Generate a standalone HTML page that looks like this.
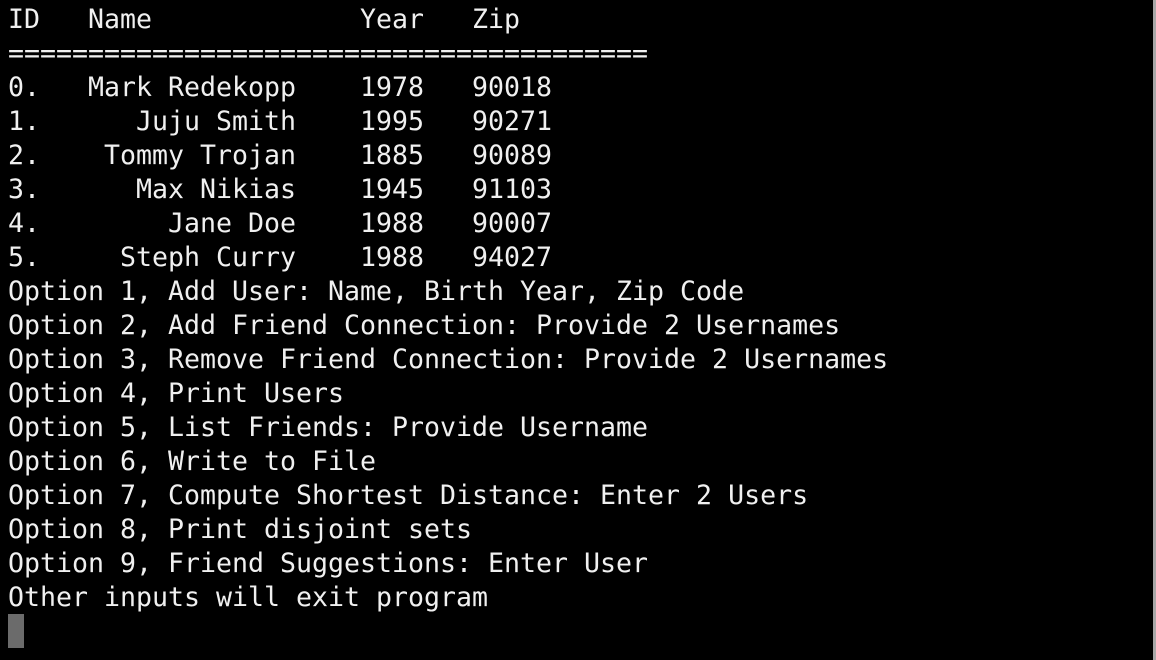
<!DOCTYPE html>
<html><head><style>
html,body{margin:0;padding:0;background:#000;width:1156px;height:660px;overflow:hidden}
pre{position:absolute;left:8px;top:3px;margin:0;font-family:"DejaVu Sans Mono","Liberation Mono",monospace;font-size:26.58px;line-height:34px;color:#f0f0f0;letter-spacing:0}
.cur{position:absolute;left:8px;top:614px;width:16px;height:34px;background:#6b6b6b}
.sb{position:absolute;left:1153px;top:0;width:3px;height:660px;background:#a8a8a8}
</style></head><body>
<pre>ID   Name             Year   Zip
========================================
0.   Mark Redekopp    1978   90018
1.      Juju Smith    1995   90271
2.    Tommy Trojan    1885   90089
3.      Max Nikias    1945   91103
4.        Jane Doe    1988   90007
5.     Steph Curry    1988   94027
Option 1, Add User: Name, Birth Year, Zip Code
Option 2, Add Friend Connection: Provide 2 Usernames
Option 3, Remove Friend Connection: Provide 2 Usernames
Option 4, Print Users
Option 5, List Friends: Provide Username
Option 6, Write to File
Option 7, Compute Shortest Distance: Enter 2 Users
Option 8, Print disjoint sets
Option 9, Friend Suggestions: Enter User
Other inputs will exit program</pre>
<div class="cur"></div>
<div class="sb"></div>
</body></html>
